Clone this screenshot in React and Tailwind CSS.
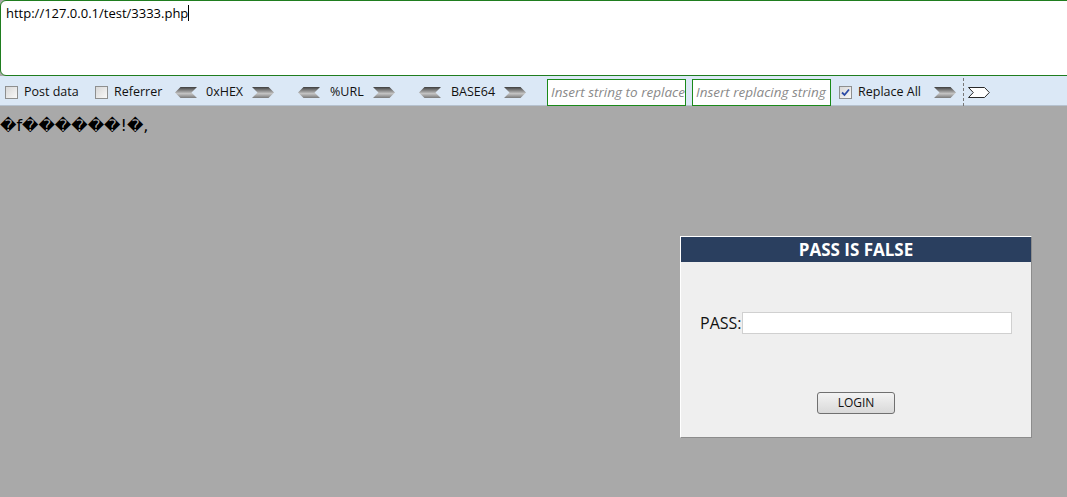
import React from "react";

const ArrowL = () => (
  <svg width="22" height="11" viewBox="0 0 22 11" className="shrink-0">
    <defs>
      <linearGradient id="gl" x1="0" y1="0" x2="0" y2="1">
        <stop offset="0" stopColor="#3e3e3e" />
        <stop offset="0.6" stopColor="#c4c4c4" />
        <stop offset="1" stopColor="#7a7a7a" />
      </linearGradient>
    </defs>
    <polygon points="0,5.5 5.5,0 22,0 16.5,5.5 22,11 5.5,11" fill="url(#gl)" />
  </svg>
);

const ArrowR = ({ light }) => (
  <svg width="22" height="11" viewBox="0 0 22 11" className="shrink-0">
    <defs>
      <linearGradient id="gr" x1="0" y1="0" x2="0" y2="1">
        <stop offset="0" stopColor="#3e3e3e" />
        <stop offset="0.6" stopColor="#c4c4c4" />
        <stop offset="1" stopColor="#7a7a7a" />
      </linearGradient>
    </defs>
    {light ? (
      <polygon points="0.5,0.5 16.5,0.5 21.3,5.5 16.5,10.5 0.5,10.5 5.3,5.5" fill="#ffffff" stroke="#2a2a2a" strokeWidth="1" />
    ) : (
      <polygon points="0,0 16.5,0 22,5.5 16.5,11 0,11 5.5,5.5" fill="url(#gr)" />
    )}
  </svg>
);

const Check = ({ checked }) => (
  <span className="w-[13px] h-[13px] border border-[#8e8f8f] bg-gradient-to-br from-[#d8d8d8] to-[#f8f8f8] flex items-center justify-center shrink-0">
    {checked && (
      <svg width="9" height="9" viewBox="0 0 9 9">
        <path d="M1 4.5 L3.5 7 L8 1.5" fill="none" stroke="#2b4aa5" strokeWidth="1.8" />
      </svg>
    )}
  </span>
);

export default function App() {
  return (
    <div className="w-[1067px] h-[497px] overflow-hidden bg-[#a9a9a9] flex flex-col" style={{ fontFamily: '"Open Sans", "Noto Sans", sans-serif' }}>
      <div className="h-[76px] bg-white shrink-0 w-[1080px] border border-[#1f7d1f] rounded-l-[6px] px-[5px] pt-[4px] text-[13px] text-black leading-[16px]">
        <span>http://127.0.0.1/test/3333.php</span>
        <span className="inline-block w-px h-[16px] bg-black align-top"></span>
      </div>
      <div className="h-[30px] shrink-0 bg-[#dbe8f6] border-b border-[#b6c2cf] flex items-center pl-[5px] pt-[3px] text-[12.5px] text-[#111] whitespace-nowrap">
        <div className="flex items-center w-[90px]">
          <Check />
          <span className="ml-[6px]">Post data</span>
        </div>
        <div className="flex items-center w-[80px]">
          <Check />
          <span className="ml-[6px]">Referrer</span>
        </div>
        <ArrowL />
        <span className="ml-[9px] w-[46px]">0xHEX</span>
        <ArrowR />
        <div className="ml-[24px]"><ArrowL /></div>
        <span className="ml-[10px] w-[43px]">%URL</span>
        <ArrowR />
        <div className="ml-[24px]"><ArrowL /></div>
        <span className="ml-[10px] w-[53px]">BASE64</span>
        <ArrowR />
        <div className="ml-[21px] w-[139px] h-[27px] shrink-0 border border-[#1a8a1a] bg-white flex items-center px-[3px] text-[13.5px] italic text-[#8a8a8a] overflow-hidden">
          Insert string to replace
        </div>
        <div className="ml-[6px] w-[139px] h-[27px] shrink-0 border border-[#1a8a1a] bg-white flex items-center px-[3px] text-[13.5px] italic text-[#8a8a8a] overflow-hidden">
          Insert replacing string
        </div>
        <div className="ml-[8px]"><Check checked /></div>
        <span className="ml-[6px] w-[76px]">Replace All</span>
        <ArrowR />
        <div className="ml-[7px] h-[28px] border-l border-dashed border-[#777]"></div>
        <div className="ml-[4px]">
          <ArrowR light />
        </div>
      </div>
      <div className="flex-1">
        <div className="pt-[10px] text-[16px] leading-[20px] text-black" style={{ fontFamily: '"DejaVu Sans", sans-serif' }}>
          �f������!�,
        </div>
        <div className="ml-[680px] mt-[100px] w-[352px] h-[202px] bg-[#efefef] border-t border-l border-white border-r border-b border-r-[#8c8c8c] border-b-[#8c8c8c] flex flex-col">
          <div className="h-[25px] bg-[#2a3f5f] text-white font-bold text-[17px] flex items-center justify-center" style={{ fontFamily: '"Open Sans", sans-serif' }}>
            PASS IS FALSE
          </div>
          <div className="mt-[49px] flex items-center pl-[19px]">
            <span className="text-[16px] text-[#111]">PASS:</span>
            <div className="w-[270px] h-[22px] bg-white border border-[#d0d0d0]"></div>
          </div>
          <div className="mt-[57px] flex justify-center">
            <div className="w-[78px] h-[22px] rounded-[3px] border border-[#707070] bg-gradient-to-b from-[#f3f3f3] to-[#d9d9d9] flex items-center justify-center text-[12px] text-[#111]">
              LOGIN
            </div>
          </div>
        </div>
      </div>
    </div>
  );
}
